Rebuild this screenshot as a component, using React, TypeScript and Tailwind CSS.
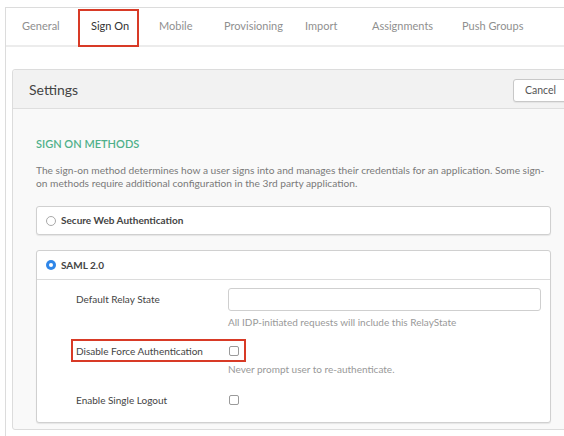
import React from 'react';

// tab label and the width given to it, so each text starts where the reference has it
const tabs: [string, number][] = [
    ['General', 69],
    ['Sign On', 68],
    ['Mobile', 65],
    ['Provisioning', 81],
    ['Import', 67],
    ['Assignments', 90],
    ['Push Groups', 80],
];

const Radio = ({ checked }: { checked?: boolean }) =>
    checked ? (
        <span className="w-[10px] h-[10px] rounded-full bg-[#2f86e8] flex items-center justify-center">
            <span className="w-[4px] h-[4px] rounded-full bg-white" />
        </span>
    ) : (
        <span className="w-[10px] h-[10px] rounded-full border border-[#a9a9a9] bg-white" />
    );

const Checkbox = () => (
    <span className="block w-[10px] h-[10px] rounded-[2px] border border-[#9a9a9a] bg-white" />
);

export default function App() {
    return (
        <div
            className="w-[564px] h-[436px] overflow-hidden bg-white text-[#333]"
            style={{ fontFamily: 'Lato, "Open Sans", Arial, sans-serif' }}
        >
            <div className="mt-[7px] ml-[5px] border-l border-t border-[#dcdcdc] h-[429px]">
                {/* Tabs */}
                <div className="relative h-[39px] border-b-2 border-[#ececec] flex items-center pl-[16px] text-[11px] text-[#8f8f8f]">
                    {tabs.map(([t, w]) => (
                        <div key={t} style={{ width: w }} className={t === 'Sign On' ? 'text-[#333] shrink-0' : 'shrink-0'}>
                            {t}
                        </div>
                    ))}
                    <span className="absolute left-[72px] top-[1px] w-[61px] h-[38px] border-2 border-[#d83a26]" />
                </div>

                {/* Settings panel */}
                <div className="ml-[6px] mt-[22px] w-[600px] border border-[#dcdcdc] rounded-[3px] bg-[#f9f9f9]">
                    <div className="h-[39px] bg-[#f2f2f2] border-b border-[#dedede] flex items-center pl-[16px] rounded-t-[3px]">
                        <span className="text-[14px] text-[#444]">Settings</span>
                        <div className="ml-auto mr-[34px] mt-[3px] w-[64px] h-[23px] bg-white border border-[#c8c8c8] rounded-[3px] flex items-center pl-[11px] text-[10.5px] text-[#555] shadow-[0_1px_1px_rgba(0,0,0,0.06)]">
                            Cancel
                        </div>
                    </div>

                    <div className="pl-[23px] pt-[28px] pb-[6px] w-[538px]">
                        <div className="text-[11px] leading-[14px] text-[#4fb08a] font-semibold">SIGN ON METHODS</div>
                        <p className="mt-[13px] text-[10.2px] leading-[13px] text-[#7a7a7a]">
                            The sign-on method determines how a user signs into and manages their credentials for an application. Some sign-on methods require additional configuration in the 3rd party application.
                        </p>

                        <div className="mt-[16px] h-[29px] bg-white border border-[#d0d0d0] rounded-[3px] shadow-[0_1px_1px_rgba(0,0,0,0.08)] flex items-center pl-[9px] gap-[5px]">
                            <Radio />
                            <span className="text-[10px] font-bold text-[#444]">Secure Web Authentication</span>
                        </div>

                        <div className="mt-[15px] bg-white border border-[#d0d0d0] rounded-[3px] shadow-[0_1px_1px_rgba(0,0,0,0.08)]">
                            <div className="h-[29px] border-b border-[#dcdcdc] flex items-center pl-[9px] gap-[5px]">
                                <Radio checked />
                                <span className="text-[10px] font-bold text-[#444]">SAML 2.0</span>
                            </div>

                            <div className="pl-[39px] pr-[9px] pt-[8px] pb-[10px] text-[10px] leading-[13px]">
                                <div className="flex">
                                    <div className="w-[152px] pt-[5px] text-[#444]">Default Relay State</div>
                                    <div className="flex-1">
                                        <div className="h-[23px] border border-[#cfcfcf] rounded-[3px] bg-white" />
                                        <div className="mt-[5px] text-[#999]">All IDP-initiated requests will include this RelayState</div>
                                    </div>
                                </div>

                                <div className="relative flex items-center h-[24px] mt-[10px]">
                                    <span className="absolute left-[-5px] top-0 w-[175px] h-[23px] border-2 border-[#d83a26]" />
                                    <div className="w-[153px] text-[#444]">Disable Force Authentication</div>
                                    <Checkbox />
                                </div>
                                <div className="ml-[152px] text-[#999]">Never prompt user to re-authenticate.</div>

                                <div className="flex items-center h-[24px] mt-[12px]">
                                    <div className="w-[153px] text-[#444]">Enable Single Logout</div>
                                    <Checkbox />
                                </div>
                            </div>
                        </div>
                    </div>
                </div>
            </div>
        </div>
    );
}
